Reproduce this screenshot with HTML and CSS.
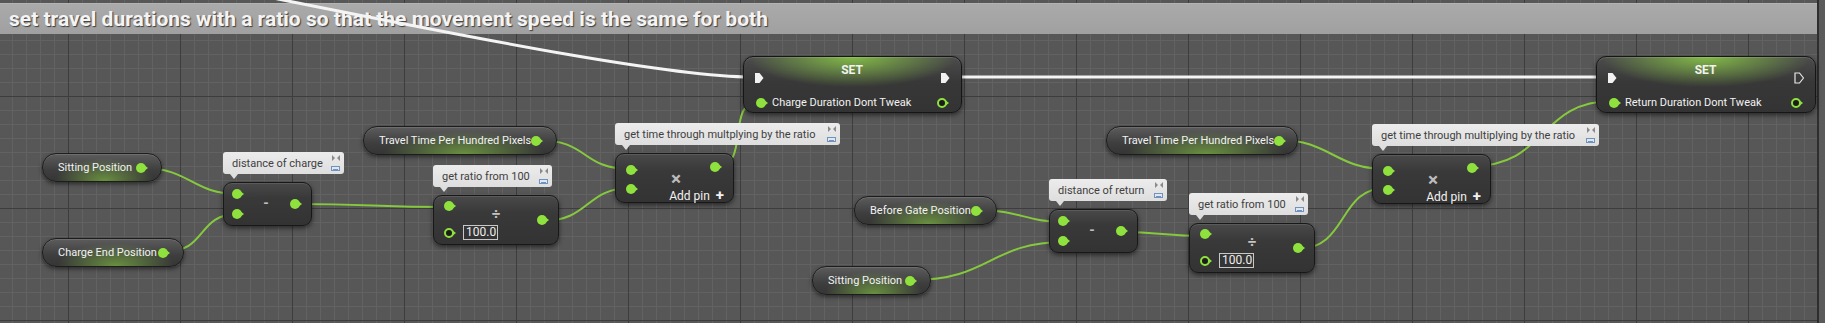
FILE: index.html
```html
<!DOCTYPE html>
<html lang="en">
<head>
    <meta charset="UTF-8">
    <title>Blueprint - travel durations</title>
    <link rel="stylesheet" href="styles.css">
</head>
<body>
    <div class="graph">
        <div class="comment-bar">set travel durations with a ratio so that the movement speed is the same for both</div>
        <div class="comment-edge"></div>

        <svg class="wires" width="1825" height="323" viewBox="0 0 1825 323">
            <g class="data-wires">
                <path d="M142 168 C190 168, 192 194, 238 194"/>
                <path d="M164 252 C208 252, 196 214, 238 214"/>
                <path d="M296 204 C370 204, 375 207, 449 207"/>
                <path d="M542 221 C590 221, 585 188, 631 188"/>
                <path d="M537 140 C590 140, 580 169, 631 169"/>
                <path d="M716 167 C752 167, 724 101, 760 101"/>
                <path d="M978 210 C1020 210, 1025 222, 1065 222"/>
                <path d="M913 280 C990 280, 990 242, 1065 242"/>
                <path d="M1122 232 C1160 232, 1165 236, 1204 236"/>
                <path d="M1298 249 C1348 249, 1338 188, 1386 188"/>
                <path d="M1279 140 C1330 140, 1335 169, 1386 169"/>
                <path d="M1472 166 C1548 166, 1538 101, 1613 101"/>
            </g>
            <g class="exec-wires">
                <path d="M263 -4 L283 0 C483 40, 672 77, 752 77"/>
                <path d="M950 77 L1610 77"/>
            </g>
        </svg>

        <!-- charge side -->
        <div class="var v-sit1"><span class="var-name">Sitting Position</span><span class="pin"></span></div>
        <div class="var v-charge-end"><span class="var-name">Charge End Position</span><span class="pin"></span></div>
        <div class="var v-travel1"><span class="var-name">Travel Time Per Hundred Pixels</span><span class="pin"></span></div>

        <div class="group g-sub1">
            <div class="bubble b-dist-charge">
                <span class="bubble-text">distance of charge</span>
                <span class="bubble-icons">
                    <svg width="8" height="6" viewBox="0 0 8 6"><path d="M0 0 L3 3 L0 6 Z M8 0 L5 3 L8 6 Z" fill="#8a8a8a"/></svg>
                    <svg width="9" height="5" viewBox="0 0 9 5"><rect x="0.5" y="0.5" width="8" height="4" fill="#dfe8f2" stroke="#6f93bd"/><path d="M2 3.5 H7" stroke="#6f93bd"/></svg>
                </span>
            </div>
            <div class="fn sub">
                <div class="ins"><span class="pin"></span><span class="pin"></span></div>
                <div class="op">-</div>
                <div class="outs"><span class="pin"></span></div>
            </div>
        </div>

        <div class="group g-div1">
            <div class="bubble b-ratio">
                <span class="bubble-text">get ratio from 100</span>
                <span class="bubble-icons">
                    <svg width="8" height="6" viewBox="0 0 8 6"><path d="M0 0 L3 3 L0 6 Z M8 0 L5 3 L8 6 Z" fill="#8a8a8a"/></svg>
                    <svg width="9" height="5" viewBox="0 0 9 5"><rect x="0.5" y="0.5" width="8" height="4" fill="#dfe8f2" stroke="#6f93bd"/><path d="M2 3.5 H7" stroke="#6f93bd"/></svg>
                </span>
            </div>
            <div class="fn div">
                <div class="ins">
                    <span class="pin"></span>
                    <span class="in-row"><span class="pin ring"></span><span class="num-box">100.0</span></span>
                </div>
                <div class="div-sign">&divide;</div>
                <div class="outs"><span class="pin"></span></div>
            </div>
        </div>

        <div class="group g-mul1">
            <div class="bubble b-time1">
                <span class="bubble-text">get time through multplying by the ratio</span>
                <span class="bubble-icons">
                    <svg width="8" height="6" viewBox="0 0 8 6"><path d="M0 0 L3 3 L0 6 Z M8 0 L5 3 L8 6 Z" fill="#8a8a8a"/></svg>
                    <svg width="9" height="5" viewBox="0 0 9 5"><rect x="0.5" y="0.5" width="8" height="4" fill="#dfe8f2" stroke="#6f93bd"/><path d="M2 3.5 H7" stroke="#6f93bd"/></svg>
                </span>
            </div>
            <div class="fn mul">
                <div class="ins"><span class="pin"></span><span class="pin"></span></div>
                <div class="mul-body">
                    <span class="pin out-pin"></span>
                    <span class="mul-sign">&times;</span>
                    <span class="add-pin">Add pin <b>+</b></span>
                </div>
            </div>
        </div>

        <div class="set s-charge">
            <div class="set-title">SET</div>
            <div class="exec-row">
                <svg class="exec" width="10" height="12" viewBox="0 0 10 12"><path d="M1 1 H5.5 L9.5 6 L5.5 11 H1 Z" fill="#f2f2f2"/></svg>
                <svg class="exec" width="10" height="12" viewBox="0 0 10 12"><path d="M1 1 H5.5 L9.5 6 L5.5 11 H1 Z" fill="#f2f2f2"/></svg>
            </div>
            <div class="data-row">
                <span class="pin"></span>
                <span class="set-label">Charge Duration Dont Tweak</span>
                <span class="pin ring"></span>
            </div>
        </div>

        <!-- return side -->
        <div class="var v-gate"><span class="var-name">Before Gate Position</span><span class="pin"></span></div>
        <div class="var v-sit2"><span class="var-name">Sitting Position</span><span class="pin"></span></div>
        <div class="var v-travel2"><span class="var-name">Travel Time Per Hundred Pixels</span><span class="pin"></span></div>

        <div class="group g-sub2">
            <div class="bubble b-dist-return">
                <span class="bubble-text">distance of return</span>
                <span class="bubble-icons">
                    <svg width="8" height="6" viewBox="0 0 8 6"><path d="M0 0 L3 3 L0 6 Z M8 0 L5 3 L8 6 Z" fill="#8a8a8a"/></svg>
                    <svg width="9" height="5" viewBox="0 0 9 5"><rect x="0.5" y="0.5" width="8" height="4" fill="#dfe8f2" stroke="#6f93bd"/><path d="M2 3.5 H7" stroke="#6f93bd"/></svg>
                </span>
            </div>
            <div class="fn sub">
                <div class="ins"><span class="pin"></span><span class="pin"></span></div>
                <div class="op">-</div>
                <div class="outs"><span class="pin"></span></div>
            </div>
        </div>

        <div class="group g-div2">
            <div class="bubble b-ratio">
                <span class="bubble-text">get ratio from 100</span>
                <span class="bubble-icons">
                    <svg width="8" height="6" viewBox="0 0 8 6"><path d="M0 0 L3 3 L0 6 Z M8 0 L5 3 L8 6 Z" fill="#8a8a8a"/></svg>
                    <svg width="9" height="5" viewBox="0 0 9 5"><rect x="0.5" y="0.5" width="8" height="4" fill="#dfe8f2" stroke="#6f93bd"/><path d="M2 3.5 H7" stroke="#6f93bd"/></svg>
                </span>
            </div>
            <div class="fn div">
                <div class="ins">
                    <span class="pin"></span>
                    <span class="in-row"><span class="pin ring"></span><span class="num-box">100.0</span></span>
                </div>
                <div class="div-sign">&divide;</div>
                <div class="outs"><span class="pin"></span></div>
            </div>
        </div>

        <div class="group g-mul2">
            <div class="bubble b-time2">
                <span class="bubble-text">get time through multiplying by the ratio</span>
                <span class="bubble-icons">
                    <svg width="8" height="6" viewBox="0 0 8 6"><path d="M0 0 L3 3 L0 6 Z M8 0 L5 3 L8 6 Z" fill="#8a8a8a"/></svg>
                    <svg width="9" height="5" viewBox="0 0 9 5"><rect x="0.5" y="0.5" width="8" height="4" fill="#dfe8f2" stroke="#6f93bd"/><path d="M2 3.5 H7" stroke="#6f93bd"/></svg>
                </span>
            </div>
            <div class="fn mul">
                <div class="ins"><span class="pin"></span><span class="pin"></span></div>
                <div class="mul-body">
                    <span class="pin out-pin"></span>
                    <span class="mul-sign">&times;</span>
                    <span class="add-pin">Add pin <b>+</b></span>
                </div>
            </div>
        </div>

        <div class="set s-return">
            <div class="set-title">SET</div>
            <div class="exec-row">
                <svg class="exec" width="10" height="12" viewBox="0 0 10 12"><path d="M1 1 H5.5 L9.5 6 L5.5 11 H1 Z" fill="#f2f2f2"/></svg>
                <svg class="exec" width="10" height="12" viewBox="0 0 10 12"><path d="M1 1 H5.5 L9.5 6 L5.5 11 H1 Z" fill="none" stroke="#e8e8e8" stroke-width="1.2"/></svg>
            </div>
            <div class="data-row">
                <span class="pin"></span>
                <span class="set-label">Return Duration Dont Tweak</span>
                <span class="pin ring"></span>
            </div>
        </div>
    </div>
</body>
</html>
```

FILE: styles.css
```css
body {
    margin: 0;
    background-color: #575757;
    font-family: Roboto, "Liberation Sans", sans-serif;
}
.graph {
    position: relative;
    width: 1825px;
    height: 323px;
    overflow: hidden;
    background-color: #575757;
    background-image:
        linear-gradient(to right, #3d3d3d 1px, transparent 1px),
        linear-gradient(to bottom, #3d3d3d 1px, transparent 1px),
        linear-gradient(to right, #626262 1px, transparent 1px),
        linear-gradient(to bottom, #626262 1px, transparent 1px);
    background-size: 112px 112px, 112px 112px, 14px 14px, 14px 14px;
    background-position: 68px 0, 0 96px, 12px 0, 0 12px;
}

/* comment box */
.comment-bar {
    position: absolute;
    left: 0;
    top: 3px;
    width: 1817px;
    height: 31px;
    padding-left: 9px;
    box-sizing: border-box;
    background: linear-gradient(#aaaaaa, #a0a0a0);
    border-top: 1px solid #b4b4b4;
    color: #f4f4f4;
    font-weight: bold;
    font-size: 21px;
    line-height: 30px;
    text-shadow: 1px 1px 1px #3c3c3c;
    white-space: nowrap;
}
.comment-edge {
    position: absolute;
    left: 1817px;
    top: 0;
    width: 8px;
    height: 323px;
    border-left: 2px solid #2e2e2e;
    box-sizing: border-box;
    background: #5b5b5b;
}

/* wires */
.wires {
    position: absolute;
    left: 0;
    top: 0;
}
.data-wires path {
    fill: none;
    stroke: #86c93e;
    stroke-width: 2;
}
.exec-wires path {
    fill: none;
    stroke: #f4f4f4;
    stroke-width: 3;
}

/* pins */
.pin {
    display: block;
    position: relative;
    flex: none;
    width: 10px;
    height: 10px;
    border-radius: 50%;
    background: #8fe23d;
}
.pin::after {
    content: "";
    position: absolute;
    left: 8px;
    top: 2px;
    border-left: 4px solid #8fe23d;
    border-top: 3px solid transparent;
    border-bottom: 3px solid transparent;
}
.pin.ring {
    box-sizing: border-box;
    border: 2px solid #8fe23d;
    background: #1c1c1c;
}
.pin.ring::after {
    left: 6px;
    top: 0;
}
.exec {
    display: block;
}

/* variable getters */
.var {
    position: absolute;
    height: 29px;
    box-sizing: border-box;
    display: flex;
    align-items: center;
    justify-content: space-between;
    padding: 0 15px 0 15px;
    border: 1px solid #1d1d1d;
    border-radius: 14px;
    background:
        radial-gradient(ellipse 42% 85% at 52% 100%, rgba(140, 205, 70, 0.6), rgba(140, 205, 70, 0) 100%),
        linear-gradient(#5c5c5c, #3e3e3e 60%, #353535);
    box-shadow: inset 0 1px 0 rgba(255, 255, 255, 0.12), 0 2px 4px rgba(0, 0, 0, 0.5);
    color: #f2f2f2;
    font-size: 11px;
    white-space: nowrap;
}
.v-sit1 { left: 42px; top: 153px; width: 120px; }
.v-charge-end { left: 42px; top: 238px; width: 142px; }
.v-travel1 { left: 363px; top: 126px; width: 194px; }
.v-gate { left: 854px; top: 196px; width: 143px; }
.v-sit2 { left: 812px; top: 266px; width: 119px; }
.v-travel2 { left: 1106px; top: 126px; width: 192px; }

/* comment bubble + node group */
.group {
    position: absolute;
    display: flex;
    flex-direction: column;
    align-items: flex-start;
    gap: 8px;
}
.g-sub1 { left: 223px; top: 152px; }
.g-div1 { left: 433px; top: 165px; }
.g-mul1 { left: 615px; top: 123px; }
.g-sub2 { left: 1049px; top: 179px; }
.g-div2 { left: 1189px; top: 193px; }
.g-mul2 { left: 1372px; top: 124px; }

.bubble {
    position: relative;
    height: 22px;
    box-sizing: border-box;
    display: flex;
    align-items: center;
    justify-content: space-between;
    padding: 0 4px 0 9px;
    border-radius: 3px;
    background: linear-gradient(#ececec, #dedede);
    color: #404040;
    font-size: 11px;
    white-space: nowrap;
}
.bubble::after {
    content: "";
    position: absolute;
    left: 7px;
    bottom: -5px;
    border-top: 5px solid #dedede;
    border-left: 4px solid transparent;
    border-right: 4px solid transparent;
}
.bubble-icons {
    display: flex;
    flex-direction: column;
    align-items: center;
    justify-content: space-between;
    height: 16px;
    margin-left: 6px;
}
.bubble-icons svg {
    display: block;
}
.b-dist-charge { width: 121px; }
.b-ratio { width: 119px; }
.b-time1 { width: 225px; }
.b-dist-return { width: 118px; }
.b-time2 { width: 227px; }

/* compact function nodes */
.fn {
    position: relative;
    box-sizing: border-box;
    display: flex;
    align-items: center;
    border: 1px solid #181818;
    border-radius: 9px;
    background: linear-gradient(#494949, #393939 35%, #333333);
    box-shadow: inset 0 1px 0 rgba(255, 255, 255, 0.1), 0 2px 5px rgba(0, 0, 0, 0.55);
    color: #e0e0e0;
}
.fn .ins {
    display: flex;
    flex-direction: column;
    align-items: flex-start;
}
.sub {
    width: 89px;
    height: 44px;
    padding: 0 11px 0 8px;
}
.sub .ins { gap: 10px; }
.sub .op {
    flex: 1;
    text-align: center;
    font-size: 14px;
    font-weight: bold;
    color: #bdbdbd;
    margin-top: -2px;
}

.div {
    width: 126px;
    height: 50px;
    padding: 0 11px 0 10px;
    justify-content: space-between;
}
.div .ins {
    gap: 14px;
    padding-top: 1px;
}
.in-row {
    display: flex;
    align-items: center;
    gap: 9px;
}
.num-box {
    border: 1px solid #c8c8c8;
    padding: 0 1px 0 2px;
    font-size: 12px;
    line-height: 13px;
    color: #eeeeee;
}
.div-sign {
    position: absolute;
    left: 0;
    right: 0;
    top: 11px;
    text-align: center;
    font-size: 15px;
    font-weight: bold;
    line-height: 14px;
    color: #c4c4c4;
}

.mul {
    width: 119px;
    height: 50px;
    padding: 0 9px 0 10px;
    align-items: stretch;
}
.mul .ins {
    justify-content: center;
    gap: 9px;
    padding-top: 2px;
}
.mul-body {
    flex: 1;
    display: flex;
    flex-direction: column;
    align-items: flex-end;
    padding-top: 8px;
}
.out-pin {
    margin-right: 4px;
}
.mul-sign {
    align-self: center;
    margin-left: -8px;
    font-size: 19px;
    line-height: 13px;
    font-weight: bold;
    color: #bcbcbc;
}
.add-pin {
    margin-top: 1px;
    font-size: 12px;
    color: #f2f2f2;
    white-space: nowrap;
}
.add-pin b {
    font-size: 15px;
    margin-left: 3px;
}

/* SET nodes */
.set {
    position: absolute;
    width: 219px;
    height: 57px;
    box-sizing: border-box;
    display: flex;
    flex-direction: column;
    padding: 6px 11px 0 10px;
    border: 1px solid #161616;
    border-radius: 10px;
    background:
        radial-gradient(ellipse 48% 55% at 50% 0%, rgba(140, 205, 70, 0.85), rgba(140, 205, 70, 0) 100%),
        linear-gradient(#4c4c4c, #383838 45%, #333333);
    box-shadow: inset 0 1px 0 rgba(255, 255, 255, 0.12), 0 2px 5px rgba(0, 0, 0, 0.55);
    color: #f2f2f2;
}
.s-charge { left: 743px; top: 56px; }
.s-return { left: 1596px; top: 56px; width: 220px; }
.set-title {
    text-align: center;
    font-size: 12px;
    font-weight: bold;
    line-height: 14px;
}
.exec-row {
    display: flex;
    justify-content: space-between;
    margin-top: -5px;
}
.data-row {
    display: flex;
    align-items: center;
    margin-top: 12px;
    padding-left: 2px;
    font-size: 11px;
    white-space: nowrap;
}
.set-label {
    flex: 1;
    margin-left: 6px;
}
.data-row .ring {
    margin-right: 3px;
}
```
